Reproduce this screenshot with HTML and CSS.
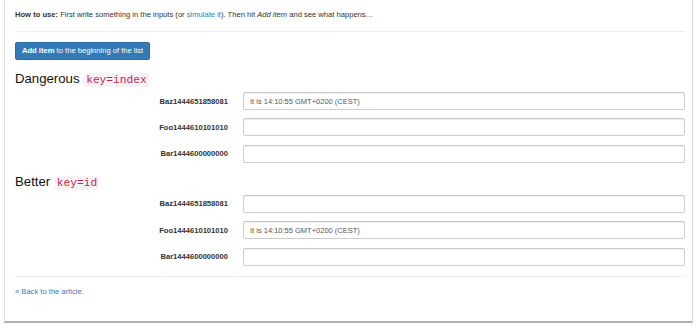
FILE: index.html
```html
<!DOCTYPE html>
<html>
<head>
<meta charset="utf-8">
<link rel="stylesheet" href="styles.css">
</head>
<body>
<div class="window">
  <p class="intro"><strong>How to use:</strong> First write something in the inputs (or <a href="#">simulate it</a>). Then hit <em>Add item</em> and see what happens…</p>
  <hr class="rule top-rule">
  <button class="btn"><strong>Add item</strong> to the beginning of the list</button>

  <h3 class="heading">Dangerous <code class="code">key=index</code></h3>
  <div class="row"><label class="label">Baz1444651858081</label><input class="field" value="It is 14:10:55 GMT+0200 (CEST)"></div>
  <div class="row"><label class="label">Foo1444610101010</label><input class="field" value=""></div>
  <div class="row"><label class="label">Bar1444600000000</label><input class="field" value=""></div>

  <h3 class="heading">Better <code class="code">key=id</code></h3>
  <div class="row"><label class="label">Baz1444651858081</label><input class="field" value=""></div>
  <div class="row"><label class="label">Foo1444610101010</label><input class="field" value="It is 14:10:55 GMT+0200 (CEST)"></div>
  <div class="row"><label class="label">Bar1444600000000</label><input class="field" value=""></div>

  <hr class="rule bottom-rule">
  <p class="back"><a href="#">« Back to the article.</a></p>
</div>
</body>
</html>
```
FILE: styles.css
```css
html, body {
  margin: 0;
  padding: 0;
  background: #fff;
}
body {
  font-family: "Liberation Sans", Arial, sans-serif;
  font-size: 7.6px;
  line-height: 11px;
  color: #333;
}
.window {
  box-sizing: border-box;
  width: 689px;
  height: 323px;
  margin-left: 4px;
  padding: 9px 7px 0 10px;
  border-left: 1px solid #dcdcdc;
  border-right: 1px solid #dcdcdc;
  border-bottom: 2px solid #b0b0b0;
  box-shadow: 0 1px 1px rgba(0,0,0,0.15);
  overflow: hidden;
}
a {
  color: #337ab7;
  text-decoration: none;
}
.intro {
  margin: 0;
}
.rule {
  border: 0;
  border-top: 1px solid #eee;
  height: 0;
}
.top-rule {
  margin: 11px 0 10px;
}
.btn {
  display: block;
  height: 18px;
  padding: 0 6px;
  margin: 0;
  font-family: inherit;
  font-size: 7.6px;
  line-height: 16px;
  color: #fff;
  background: #337ab7;
  border: 1px solid #2e6da4;
  border-radius: 2px;
}
.heading {
  margin: 12px 0 5px;
  font-size: 13.2px;
  line-height: 14px;
  font-weight: normal;
  color: #111;
}
.code {
  font-family: "Liberation Mono", "DejaVu Sans Mono", monospace;
  font-size: 11.2px;
  margin-left: 1px;
  padding: 1px 2px;
  color: #c7254e;
  background: #f9f2f4;
  border-radius: 2px;
}
.row {
  display: grid;
  grid-template-columns: 213px 1fr;
  column-gap: 15px;
  align-items: center;
  margin-bottom: 8.4px;
}
.label {
  text-align: right;
  font-weight: bold;
  color: #333;
}
.field {
  box-sizing: border-box;
  width: 100%;
  height: 18px;
  margin: 0;
  padding: 0 6px;
  font-family: inherit;
  font-size: 7.5px;
  color: #555;
  background: #fff;
  border: 1px solid #ccc;
  border-radius: 2px;
  box-shadow: inset 0 1px 1px rgba(0,0,0,0.075);
  outline: none;
}
.bottom-rule {
  margin: 10.7px 0 9px;
}
.back {
  margin: 0;
}
```
